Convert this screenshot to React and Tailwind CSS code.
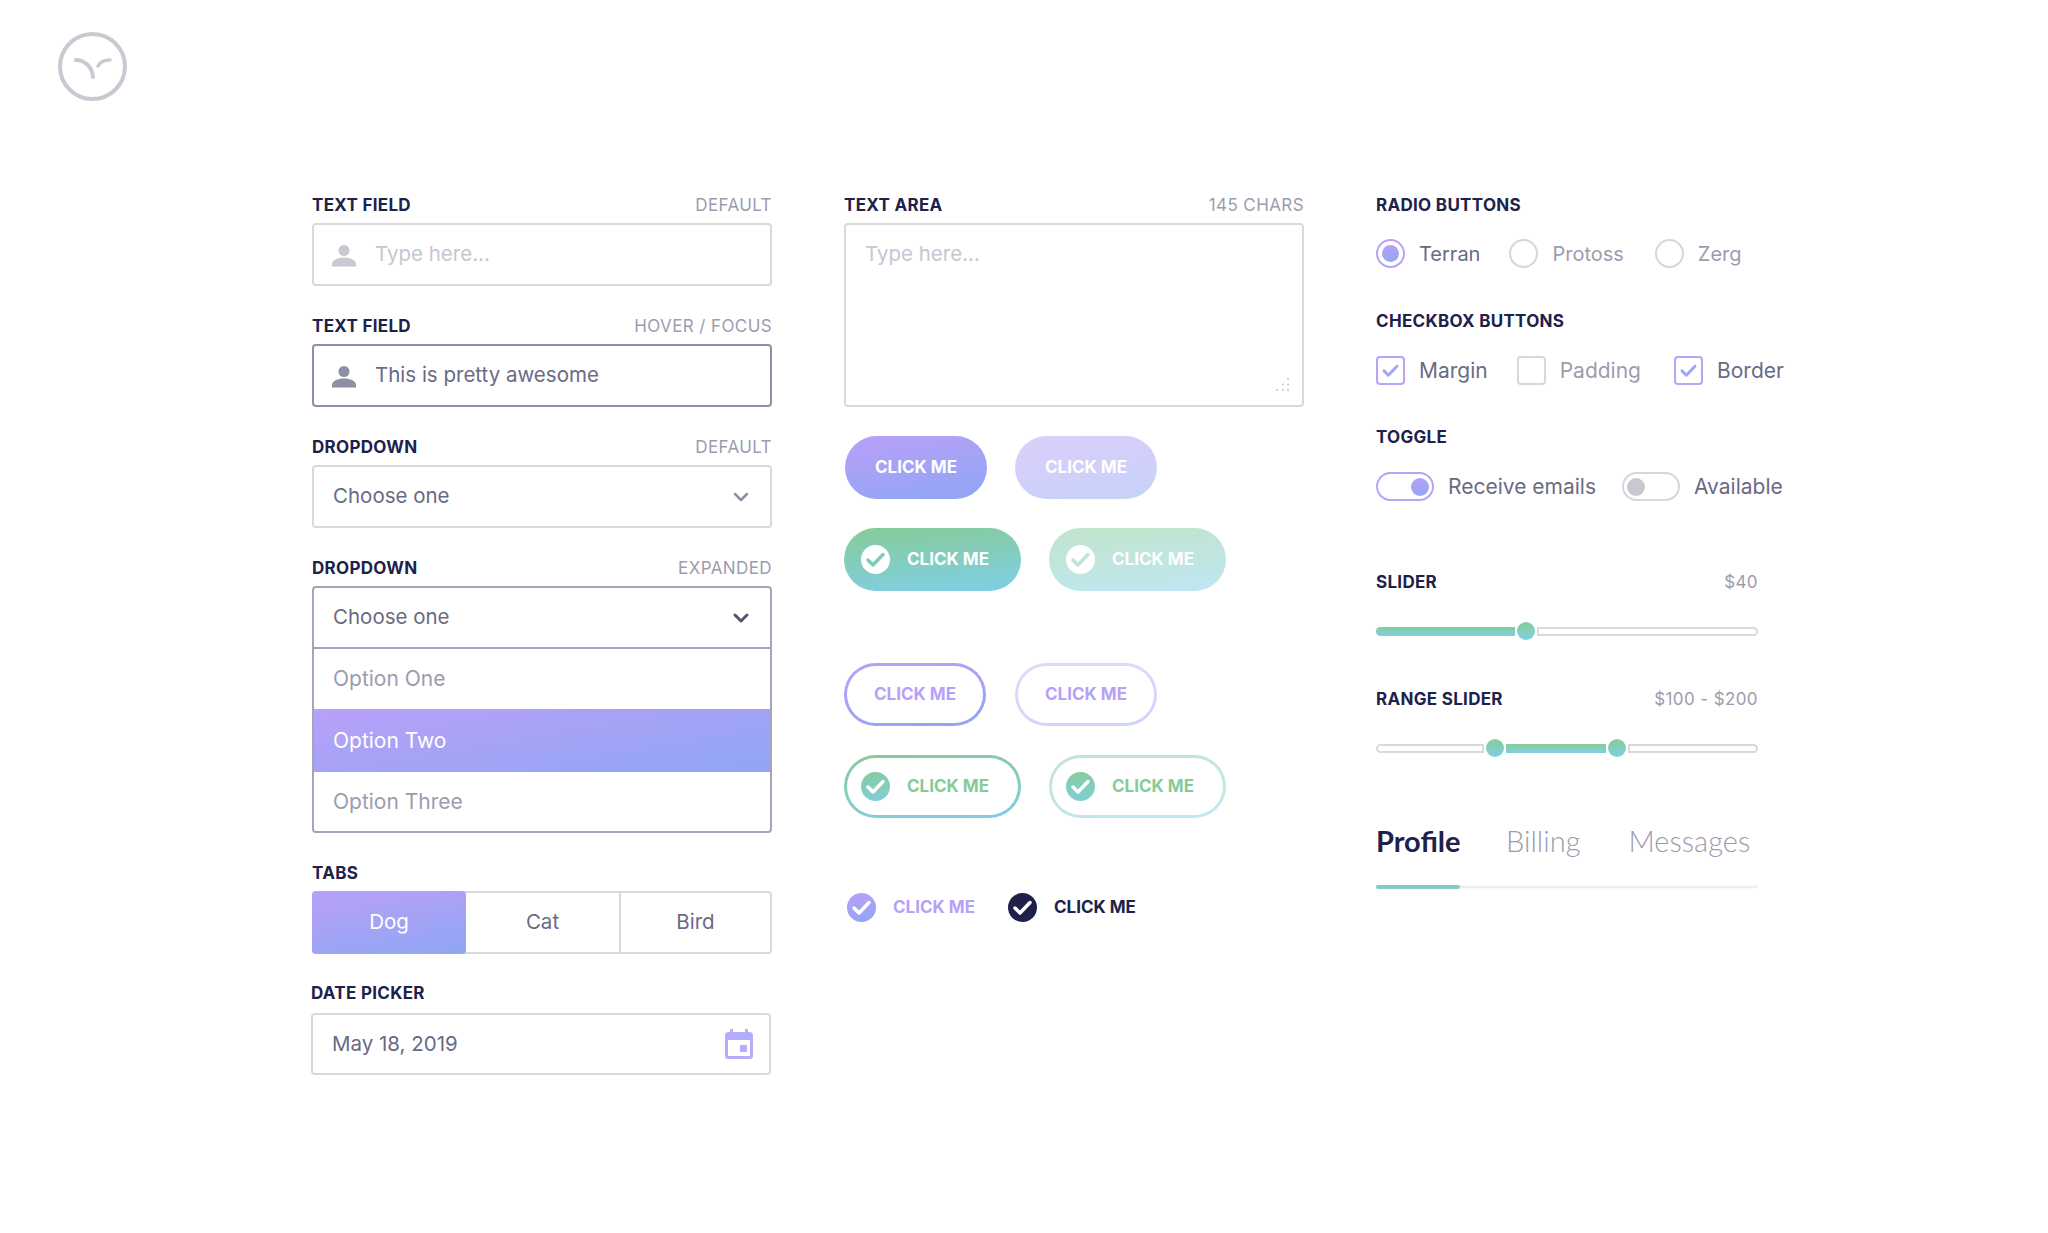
import { ChevronDown } from 'lucide-react';

const purple = 'bg-linear-[170deg,#b9a0f9,#8fa6f3]';

function Logo() {
  return (
    <svg width="69" height="69" viewBox="0 0 69 69" fill="none" stroke="#c9c9d2" strokeLinecap="round">
      <circle cx="34.5" cy="34.5" r="32.5" strokeWidth="4" />
      <path d="M18 28c8 0 16 6 17 17" strokeWidth="4" />
      <path d="M40 34c2-4 7-6 12-6" strokeWidth="3.5" />
    </svg>
  );
}

function Person({ color }) {
  return (
    <svg width="24" height="24" viewBox="0 0 24 24" fill={color}>
      <circle cx="12" cy="7.5" r="5.5" />
      <path d="M0 21c0-4 6-6.500 12-6.500S24 17 24 21v2.500H0z" />
    </svg>
  );
}

function Check({ color, width = 3.5, size = 29 }) {
  return (
    <svg width={size} height={size} viewBox="0 0 29 29" fill="none" stroke={color} strokeWidth={width} strokeLinecap="round" strokeLinejoin="round">
      <path d="M7 15l5 5 10-10.500" />
    </svg>
  );
}

function Label({ title, note, className = '' }) {
  return (
    <div className={`flex h-5 items-center justify-between text-[17px] ${className}`}>
      <span className="font-bold tracking-[0.3px] text-[#20214a]">{title}</span>
      {note && <span className="text-[#9c9cae] tracking-[0.4px]">{note}</span>}
    </div>
  );
}

function Field({ title, note, children, className = 'mb-[31px]' }) {
  return (
    <div className={className}>
      <Label title={title} note={note} />
      <div className="mt-[7px]">{children}</div>
    </div>
  );
}

function TextField({ person, text, textColor, border }) {
  return (
    <div className={`flex h-[63px] items-center rounded border-2 px-[18px] text-[20.5px] ${border}`}>
      <Person color={person} />
      <span className={`ml-[19px] ${textColor}`}>{text}</span>
    </div>
  );
}

function FilledButton({ faded, children, width }) {
  return (
    <div className={`flex h-[63px] items-center justify-center rounded-full text-[17px] font-bold text-white ${purple} ${faded ? 'opacity-50' : ''} ${width}`}>
      {children}
    </div>
  );
}

function GreenButton({ faded }) {
  return (
    <div className={`flex h-[63px] w-[177px] items-center rounded-full bg-linear-[175deg,#87cb98,#7fcfe7] pl-[17px] text-[17px] font-bold text-white ${faded ? 'opacity-50' : ''}`}>
      <span className="flex size-[29px] items-center justify-center rounded-full bg-white">
        <Check color="#7fcdb0" />
      </span>
      <span className="ml-[17px]">CLICK ME</span>
    </div>
  );
}

function OutlineButton({ faded }) {
  return (
    <div className={`h-[63px] w-[142px] rounded-full p-[3px] ${faded ? 'bg-linear-[170deg,#e2d8fc,#cdd5fa]' : purple}`}>
      <div className="flex h-full items-center justify-center rounded-full bg-white text-[17px] font-bold text-[#b7a0f7]">
        CLICK ME
      </div>
    </div>
  );
}

function OutlineGreen({ faded }) {
  return (
    <div className={`h-[63px] w-[177px] rounded-full p-[3px] ${faded ? 'bg-linear-[175deg,#c3e5cc,#bfe8f2]' : 'bg-linear-[175deg,#87cb98,#7fcfe7]'}`}>
      <div className="flex h-full items-center rounded-full bg-white pl-[14px] text-[17px] font-bold text-[#85cb98]">
        <span className="flex size-[29px] items-center justify-center rounded-full bg-linear-to-b from-[#87cb9f] to-[#81cfd5]">
          <Check color="#fff" />
        </span>
        <span className="ml-[17px]">CLICK ME</span>
      </div>
    </div>
  );
}

function Radio({ on, label, gap = 'mr-[29px]' }) {
  return (
    <div className={`flex shrink-0 items-center ${gap}`}>
      <span className={`flex size-[29px] items-center justify-center rounded-full border-2 ${on ? 'border-[#b9a3f8]' : 'border-[#d6d6df]'}`}>
        {on && <span className={`size-[17px] rounded-full ${purple}`} />}
      </span>
      <span className={`ml-[14px] text-[20px] ${on ? 'text-[#6a6a84]' : 'text-[#9c9cae]'}`}>{label}</span>
    </div>
  );
}

function Checkbox({ on, label, gap = 'mr-[29px]' }) {
  return (
    <div className={`flex shrink-0 items-center ${gap}`}>
      <span className={`flex size-[29px] items-center justify-center rounded-[4px] border-2 ${on ? 'border-[#b9a3f8]' : 'border-[#d6d6df]'}`}>
        {on && <Check color="#a3a5f6" width={3.5} size={25} />}
      </span>
      <span className={`ml-[14px] text-[21px] ${on ? 'text-[#6a6a84]' : 'text-[#9c9cae]'}`}>{label}</span>
    </div>
  );
}

function Toggle({ on, label, gap }) {
  return (
    <div className={`flex shrink-0 items-center ${gap}`}>
      <span className={`flex h-[29px] w-[58px] items-center rounded-full border-2 px-[3px] ${on ? 'justify-end border-[#b9a3f8]' : 'border-[#d6d6df]'}`}>
        <span className={`size-[18px] rounded-full ${on ? purple : 'bg-[#c8c8d0]'}`} />
      </span>
      <span className="ml-[14px] whitespace-nowrap text-[21px] text-[#6a6a84]">{label}</span>
    </div>
  );
}

function Thumb() {
  return <span className="mx-[2px] size-[18px] shrink-0 rounded-full bg-linear-to-b from-[#86cc98] to-[#7fcfe2]" />;
}

const trackOff = 'h-[9px] border-2 border-[#d8d8e0]';
const trackOn = 'h-[9px] bg-linear-to-b from-[#86cc98] to-[#7fd0e4]';

export default function App() {
  return (
    <div className="min-h-screen bg-white pl-[58px] pt-[32px] font-[Inter,sans-serif] text-[#6a6a84]">
      <Logo />
      <main className="mt-[95px] flex pl-[254px]">
        <section className="w-[460px]">
          <Field title="TEXT FIELD" note="DEFAULT">
            <TextField person="#c9c9d2" text="Type here..." textColor="text-[#c6c6d2]" border="border-[#d8d8e0]" />
          </Field>
          <Field title="TEXT FIELD" note="HOVER / FOCUS">
            <TextField person="#8e8ea4" text="This is pretty awesome" textColor="text-[#6a6a84]" border="border-[#8e8ea6]" />
          </Field>
          <Field title="DROPDOWN" note="DEFAULT">
            <div className="flex h-[63px] items-center justify-between rounded border-2 border-[#d8d8e0] pl-[19px] pr-[17px] text-[20.5px]">
              Choose one
              <ChevronDown size={24} strokeWidth={2.5} color="#8e8ea4" />
            </div>
          </Field>
          <Field title="DROPDOWN" note="EXPANDED">
            <div className="overflow-hidden rounded border-2 border-[#a5a5b9] text-[21px]">
              <div className="flex h-[61px] items-center justify-between border-b-2 border-[#a5a5b9] pl-[19px] pr-[17px] text-[20.5px]">
                Choose one
                <ChevronDown size={24} strokeWidth={3} color="#53536f" />
              </div>
              <div className="flex h-[60px] items-center pl-[19px] text-[#9c9cae]">Option One</div>
              <div className={`flex h-[63px] items-center pl-[19px] text-white ${purple}`}>Option Two</div>
              <div className="flex h-[59px] items-center pl-[19px] text-[#9c9cae]">Option Three</div>
            </div>
          </Field>
          <Field title="TABS" className="mb-[30px]">
            <div className="flex h-[63px] rounded border-2 border-[#d8d8e0] text-[20.5px]">
              <div className={`-m-[2px] flex h-[63px] w-[154px] items-center justify-center rounded text-white ${purple}`}>Dog</div>
              <div className="ml-[2px] flex w-[155px] items-center justify-center border-r-2 border-[#d8d8e0]">Cat</div>
              <div className="flex flex-1 items-center justify-center">Bird</div>
            </div>
          </Field>
          <div className="-ml-px mr-px">
            <Label title="DATE PICKER" />
            <div className="mt-[9px] flex h-[62px] items-center justify-between rounded border-2 border-[#d8d8e0] pl-[19px] pr-[16px] text-[20.5px]">
              May 18, 2019
              <svg width="28" height="30" viewBox="0 0 28 30" fill="#b3adfb">
                <path d="M5 0h3v3h12V0h3v3h1.500A3.500 3.500 0 0 1 28 6.500v20a3.500 3.500 0 0 1-3.500 3.500h-21A3.500 3.500 0 0 1 0 26.500v-20A3.500 3.500 0 0 1 3.500 3H5zM3 11v15.500a.5.500 0 0 0 .5.500h21a.5.500 0 0 0 .5-.500V11z" />
                <rect x="15" y="16" width="7" height="7" />
              </svg>
            </div>
          </div>
        </section>

        <section className="ml-[72px] w-[460px]">
          <Label title="TEXT AREA" note="145 CHARS" />
          <div className="mt-[7px] flex h-[184px] flex-col justify-between rounded border-2 border-[#d8d8e0] pb-[13px] pl-[19px] pr-[12px] pt-[14px] text-[20.5px] text-[#c6c6d2]">
            Type here...
            <svg className="self-end" width="15" height="15" viewBox="0 0 15 15" fill="#c2c2ce">
              <circle cx="13" cy="2" r="1" />
              <circle cx="8" cy="7.500" r="1" />
              <circle cx="13" cy="7.500" r="1" />
              <circle cx="2" cy="13" r="1" />
              <circle cx="8" cy="13" r="1" />
              <circle cx="13" cy="13" r="1" />
            </svg>
          </div>
          <div className="ml-px mt-[29px] flex gap-[28px]">
            <FilledButton width="w-[142px]">CLICK ME</FilledButton>
            <FilledButton faded width="w-[142px]">CLICK ME</FilledButton>
          </div>
          <div className="mt-[29px] flex gap-[28px]">
            <GreenButton />
            <GreenButton faded />
          </div>
          <div className="mt-[72px] flex gap-[29px]">
            <OutlineButton />
            <OutlineButton faded />
          </div>
          <div className="mt-[29px] flex gap-[28px]">
            <OutlineGreen />
            <OutlineGreen faded />
          </div>
          <div className="ml-[3px] mt-[75px] flex items-center text-[17px] font-bold">
            <span className={`flex size-[29px] items-center justify-center rounded-full ${purple}`}>
              <Check color="#fff" />
            </span>
            <span className="ml-[17px] text-[#b7a0f7]">CLICK ME</span>
            <span className="ml-[33px] flex size-[29px] items-center justify-center rounded-full bg-[#20214a]">
              <Check color="#fff" />
            </span>
            <span className="ml-[17px] text-[#20214a]">CLICK ME</span>
          </div>
        </section>

        <section className="ml-[72px] w-[382px]">
          <Label title="RADIO BUTTONS" />
          <div className="mt-[23px] flex h-[29px] items-center">
            <Radio on label="Terran" />
            <Radio label="Protoss" gap="mr-[31px]" />
            <Radio label="Zerg" />
          </div>
          <Label title="CHECKBOX BUTTONS" className="mt-[44px]" />
          <div className="mt-[24px] flex h-[29px] items-center">
            <Checkbox on label="Margin" />
            <Checkbox label="Padding" gap="mr-[33px]" />
            <Checkbox on label="Border" />
          </div>
          <Label title="TOGGLE" className="mt-[43px]" />
          <div className="mt-[24px] flex h-[29px] items-center">
            <Toggle on label="Receive emails" gap="mr-[26px]" />
            <Toggle label="Available" />
          </div>
          <Label title="SLIDER" note="$40" className="mt-[72px]" />
          <div className="mt-[29px] flex h-[18px] items-center">
            <span className={`w-[139px] rounded-l-full ${trackOn}`} />
            <Thumb />
            <span className={`flex-1 rounded-r-full ${trackOff}`} />
          </div>
          <Label title="RANGE SLIDER" note="$100 - $200" className="mt-[50px]" />
          <div className="mt-[29px] flex h-[18px] items-center">
            <span className={`w-[108px] rounded-l-full ${trackOff}`} />
            <Thumb />
            <span className={`w-[100px] ${trackOn}`} />
            <Thumb />
            <span className={`flex-1 rounded-r-full ${trackOff}`} />
          </div>
          <div className="mt-[65px] flex h-[38px] items-center font-[Lato,sans-serif] text-[29px] font-light text-[#9c9cae]">
            <span className="w-[84px] font-bold text-[#20214a]">Profile</span>
            <span className="ml-[46px]">Billing</span>
            <span className="ml-[48px]">Messages</span>
          </div>
          <div className="mt-[25px] flex h-[4px] items-center bg-linear-to-b from-white via-[#e8e8ee] to-white">
            <span className="h-[4px] w-[84px] rounded-full bg-linear-to-b from-[#86cc98] to-[#7fd0d8]" />
          </div>
        </section>
      </main>
    </div>
  );
}
